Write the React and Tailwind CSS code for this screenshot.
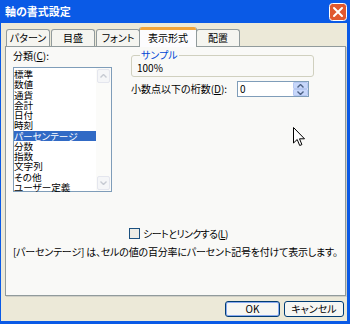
import React from "react"

const jp = "font-[Noto_Sans_CJK_JP,Noto_Sans,sans-serif] [font-feature-settings:'palt']"

const categories = ["標準", "数値", "通貨", "会計", "日付", "時刻", "パーセンテージ", "分数", "指数", "文字列", "その他", "ユーザー定義"]

function Tab ({label, selected}) {
  if (selected) {
    return (
      <div className="relative z-10 -mx-[2px] -mb-px flex h-[20px] w-[58px] flex-col overflow-hidden rounded-t-[3px] border-x border-[#919b9c] bg-[#fcfcfe] text-center text-[10px] leading-[16px]">
        <div className="h-[3px] shrink-0 bg-[#f1a43a]" />
        {label}
      </div>
    )
  }
  return (
    <div className="h-[17px] w-[44px] rounded-t-[3px] border-x border-t border-[#919b9c] bg-[#f5f5f0] text-center text-[10px] leading-[16px]">
      {label}
    </div>
  )
}

function Chevron ({up}) {
  return (
    <svg width="7" height="4" viewBox="0 0 7 4">
      <path d={up ? "M0.5 3.5 L3.5 0.5 L6.5 3.5" : "M0.5 0.5 L3.5 3.5 L6.5 0.5"} fill="none" stroke="currentColor" strokeWidth="1.4" />
    </svg>
  )
}

function CloseBox () {
  return (
    <svg width="18" height="18" viewBox="0 0 18 18">
      <rect x="0.5" y="0.5" width="17" height="17" rx="3" fill="#e0582f" stroke="white" />
      <path d="M5 5 L13 13 M13 5 L5 13" stroke="white" strokeWidth="2" strokeLinecap="round" />
    </svg>
  )
}

function App () {
  return (
    <div className={`relative flex h-[324px] w-[350px] flex-col bg-[#0a5ae6] text-black ${jp}`}>

      <div className="flex h-[23px] items-center justify-between pl-[5px] pr-[3px]">
        <p className="text-[11px] font-bold text-[#ffffff]">軸の書式設定</p>
        <CloseBox />
      </div>

      <div className="mb-[3px] ml-px mr-[3px] flex flex-1 flex-col bg-[#ece9d8] pl-[4px] pr-px">

        <div className="ml-px mt-[4px] flex h-[19px] items-end gap-px">
          <Tab label="パターン" />
          <Tab label="目盛" />
          <Tab label="フォント" />
          <Tab label="表示形式" selected />
          <Tab label="配置" />
        </div>

        <div className="flex h-[250px] flex-col border border-[#919b9c] bg-[#f9f9f7] pt-[2px] text-[10px] leading-[12px] shadow-[1px_1px_0_#d0cfc6]">
          <div className="flex items-start">
            <div className="ml-[7px] mt-px w-[99px]">
              <p>分類(<u>C</u>):</p>
              <div className="mt-[5px] flex h-[125px] border border-[#7f9db9] bg-white">
                <div className="flex-1 pt-px">
                  {categories.map((c) => (
                    <div
                      key={c}
                      className={c === "パーセンテージ" ? "h-[10.25px] bg-[#316ac5] text-[9.6px] leading-[10.25px] text-white" : "h-[10.25px] text-[9.6px] leading-[10.25px]"}
                    >
                      {c}
                    </div>
                  ))}
                </div>
                <div className="flex w-[15px] flex-col justify-between bg-[#fbfbf9] p-px">
                  <div className="flex h-[14px] items-center justify-center rounded-[2px] border border-[#e4e6ee] bg-[#f5f6f8] text-[#c6cad2]"><Chevron up /></div>
                  <div className="flex h-[14px] items-center justify-center rounded-[2px] border border-[#e4e6ee] bg-[#f5f6f8] text-[#c6cad2]"><Chevron /></div>
                </div>
              </div>
            </div>

            <div className="ml-[19px] w-[183px]">
              <fieldset className="rounded-[3px] border border-[#d0d0bf] pb-[2px] pl-[5px] pt-[1px]">
                <legend className="ml-[3px] px-px text-[#0046d5]">サンプル</legend>
                <p>100%</p>
              </fieldset>
              <div className="mt-[4px] flex h-[16px] items-center">
                <p className="w-[106px]">小数点以下の桁数(<u>D</u>):</p>
                <div className="flex h-[16px] w-[72px] border border-[#7f9db9] bg-white">
                  <p className="flex-1 pl-[2px] leading-[14px]">0</p>
                  <div className="flex w-[15px] flex-col">
                    <div className="flex h-[7px] items-center justify-center rounded-[1px] border border-[#b6c8f2] bg-[#c7d7fa] text-[#4d6185]"><Chevron up /></div>
                    <div className="flex h-[7px] items-center justify-center rounded-[1px] border border-[#b6c8f2] bg-[#c7d7fa] text-[#4d6185]"><Chevron /></div>
                  </div>
                </div>
              </div>
            </div>
          </div>

          <div className="mt-[35px] flex h-[13px] items-center justify-center pl-[6px]">
            <div className="mr-[3px] h-[11px] w-[11px] border border-[#1c5180] bg-[#ecece6]" />
            <p className="tracking-[-0.6px]">シートとリンクする(<u>L</u>)</p>
          </div>

          <p className="ml-[7px] mt-[6px] tracking-[-0.2px]">[パーセンテージ] は、セルの値の百分率にパーセント記号を付けて表示します。</p>
        </div>

        <div className="mr-[2px] mt-[5px] flex justify-end gap-[4px] text-[10px]">
          <button className="h-[16px] w-[55px] rounded-[3px] border border-[#003c74] bg-[#f6f6f3] leading-[12px] ring-1 ring-inset ring-[#8aaaf0]">OK</button>
          <button className="h-[16px] w-[60px] rounded-[3px] border border-[#003c74] bg-[#f6f6f3] leading-[12px]">キャンセル</button>
        </div>
      </div>

      <svg className="absolute left-[293px] top-[127px]" width="13" height="20" viewBox="0 0 13 20">
        <path d="M0.5 0.5 L0.5 16 L4.2 12.5 L6.7 18.5 L8.9 17.6 L6.5 11.8 L11.5 11.8 Z" fill="white" stroke="black" strokeWidth="1" strokeLinejoin="round" />
      </svg>
    </div>
  )
}

export default App
